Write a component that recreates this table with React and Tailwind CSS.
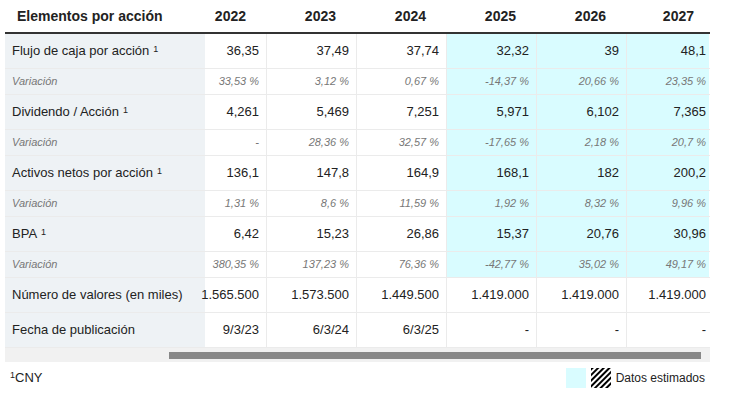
import React from 'react';

const rows = [
  { label: 'Flujo de caja por acción', sup: true, values: ['36,35', '37,49', '37,74', '32,32', '39', '48,1'] },
  { label: 'Variación', variation: true, values: ['33,53 %', '3,12 %', '0,67 %', '-14,37 %', '20,66 %', '23,35 %'] },
  { label: 'Dividendo / Acción', sup: true, values: ['4,261', '5,469', '7,251', '5,971', '6,102', '7,365'] },
  { label: 'Variación', variation: true, values: ['-', '28,36 %', '32,57 %', '-17,65 %', '2,18 %', '20,7 %'] },
  { label: 'Activos netos por acción', sup: true, values: ['136,1', '147,8', '164,9', '168,1', '182', '200,2'] },
  { label: 'Variación', variation: true, values: ['1,31 %', '8,6 %', '11,59 %', '1,92 %', '8,32 %', '9,96 %'] },
  { label: 'BPA', sup: true, values: ['6,42', '15,23', '26,86', '15,37', '20,76', '30,96'] },
  { label: 'Variación', variation: true, values: ['380,35 %', '137,23 %', '76,36 %', '-42,77 %', '35,02 %', '49,17 %'] },
  { label: 'Número de valores (en miles)', plain: true, values: ['1.565.500', '1.573.500', '1.449.500', '1.419.000', '1.419.000', '1.419.000'] },
  { label: 'Fecha de publicación', plain: true, values: ['9/3/23', '6/3/24', '6/3/25', '-', '-', '-'] },
];

const years = ['2022', '2023', '2024', '2025', '2026', '2027'];
const widths = ['w-[61px]', 'w-[90px]', 'w-[90px]', 'w-[90px]', 'w-[90px]', 'w-[83px]'];

const Sup = () => <sup className="ml-[4px] text-[9px] relative -top-[2px]">1</sup>;

export default function App() {
  return (
    <div className="w-[730px] h-[403px] bg-white text-[#222] font-['Liberation_Sans',Arial,sans-serif] pl-[5px]">
      <div className="w-[705px]">
        <div className="flex h-[34px] border-b-2 border-[#333] items-center text-[14px] font-bold">
          <div className="w-[200px] pl-[12px]">Elementos por acción</div>
          {years.map((y, i) => (
            <div
              key={y}
              className={`${widths[i]} text-right ${i === 5 ? 'pr-[15px]' : 'pr-[20px]'}`}
            >
              {y}
            </div>
          ))}
        </div>

        {rows.map((r, ri) => (
          <div
            key={ri}
            className={`flex border-b border-[#ebebeb] ${r.variation ? 'h-[26px] text-[11px] italic text-[#777]' : 'h-[35px] text-[13px]'}`}
          >
            <div className="w-[200px] bg-[#eef2f5] pl-[7px] flex items-center">
              {r.label}
              {r.sup && <Sup />}
            </div>
            {r.values.map((v, i) => (
              <div
                key={i}
                className={`${widths[i]} flex items-center justify-end border-l border-[#ebebeb] ${i === 0 ? 'border-l-0' : ''} ${i >= 3 && !r.plain ? 'bg-[#d9fcff]' : ''} ${i === 5 ? 'pr-[3px]' : 'pr-[7px]'}`}
              >
                {v}
              </div>
            ))}
          </div>
        ))}

        <div className="h-[14px] bg-[#f1f1f1] flex items-center">
          <div className="ml-[164px] w-[532px] h-[7px] bg-[#888]" />
        </div>
      </div>

      <div className="flex items-center justify-between w-[700px] mt-[6px] h-[20px]">
        <div className="text-[13px] pl-[5px]">
          <sup className="text-[9px]">1</sup>CNY
        </div>
        <div className="flex items-center gap-[5px] text-[12px]">
          <div className="w-[20px] h-[20px] bg-[#d9fcff]" />
          <svg width="20" height="20" viewBox="0 0 20 20">
            <defs>
              <pattern id="hatch" width="4" height="4" patternUnits="userSpaceOnUse" patternTransform="rotate(45)">
                <rect width="2" height="4" fill="#000" />
              </pattern>
            </defs>
            <rect width="20" height="20" fill="#fff" />
            <rect width="20" height="20" fill="url(#hatch)" />
          </svg>
          <span>Datos estimados</span>
        </div>
      </div>
    </div>
  );
}
